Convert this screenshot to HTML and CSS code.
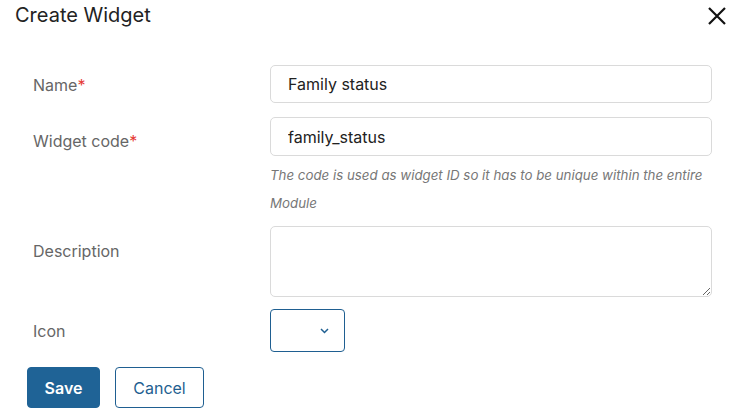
FILE: index.html
```html
<!DOCTYPE html>
<html lang="en">
<head>
<meta charset="utf-8">
<title>Create Widget</title>
<link rel="stylesheet" href="styles.css">
</head>
<body>
<div class="dialog">
  <div class="dialog-header">
    <h1 class="dialog-title">Create Widget</h1>
    <button class="close-btn" aria-label="Close">
      <svg width="18" height="18" viewBox="0 0 18 18"><path d="M1 1 L17 17 M17 1 L1 17" stroke="#111" stroke-width="2.2" fill="none"/></svg>
    </button>
  </div>
  <form class="form">
    <div class="row row-name">
      <label class="label">Name<span class="req">*</span></label>
      <div class="field"><input class="input" type="text" value="Family status"></div>
    </div>
    <div class="row row-code">
      <label class="label">Widget code<span class="req">*</span></label>
      <div class="field">
        <input class="input" type="text" value="family_status">
        <p class="hint">The code is used as widget ID so it has to be unique within the entire Module</p>
      </div>
    </div>
    <div class="row row-desc">
      <label class="label">Description</label>
      <div class="field"><textarea class="textarea"></textarea></div>
    </div>
    <div class="row row-icon">
      <label class="label">Icon</label>
      <div class="field">
        <button type="button" class="icon-select">
          <svg width="9" height="6" viewBox="0 0 9 6"><path d="M1 1 L4.5 4.5 L8 1" stroke="#1f5f91" stroke-width="1.5" fill="none"/></svg>
        </button>
      </div>
    </div>
    <div class="actions">
      <button type="button" class="btn btn-primary">Save</button>
      <button type="button" class="btn btn-outline">Cancel</button>
    </div>
  </form>
</div>
</body>
</html>
```
FILE: styles.css
```css
* { box-sizing: border-box; }
html, body { margin: 0; padding: 0; background: #fff; }
body { font-family: Inter, "Noto Sans", sans-serif; color: #222; }
.dialog { width: 735px; height: 418px; padding: 0 0 0 15px; }
.dialog-header { display: flex; justify-content: space-between; align-items: center; height: 30px; padding-right: 6px; }
.dialog-title { margin: 0; font-size: 20px; font-weight: 400; color: #222; line-height: 30px; }
.close-btn { border: 0; background: none; padding: 0; width: 24px; height: 24px; display: flex; align-items: center; justify-content: center; margin-top: 2px; }
.form { padding: 35px 23px 0 12px; }
.row { display: grid; grid-template-columns: 243px 442px; }
.label { font-size: 16px; line-height: 24px; color: #666; padding-left: 6px; }
.req { color: #e53935; }
.row-name .label { padding-top: 8px; }
.row-code { margin-top: 14px; }
.row-code .label { padding-top: 12px; }
.row-desc { margin-top: 9px; }
.row-desc .label { padding-top: 13px; }
.row-icon { margin-top: 12px; }
.row-icon .label { padding-top: 10px; }
.input { display: block; width: 100%; height: 38px; border: 1px solid #dadada; border-radius: 5px; padding: 0 17px; font-family: inherit; font-size: 16px; color: #222; outline: none; }
.row-code .input { height: 39px; }
.hint { margin: 5px 0 0; font-size: 13.3px; font-style: italic; line-height: 28px; color: #777; }
.textarea { display: block; width: 100%; height: 71px; border: 1px solid #dadada; border-radius: 5px; resize: vertical; font-family: inherit; font-size: 16px; }
.icon-select { width: 75px; height: 43px; border: 1px solid #1f5f91; border-radius: 4px; background: #fff; display: flex; justify-content: flex-end; align-items: center; padding: 0 15px 0 0; }
.actions { display: flex; gap: 15px; margin-top: 15px; }
.btn { height: 41px; border-radius: 4px; font-family: inherit; font-size: 16px; padding: 0; }
.btn-primary { width: 73px; background: #1f6396; border: 1px solid #1f6396; color: #fff; font-weight: 600; }
.btn-outline { width: 89px; background: #fff; border: 1px solid #1f5f91; color: #1f5f91; }
```
